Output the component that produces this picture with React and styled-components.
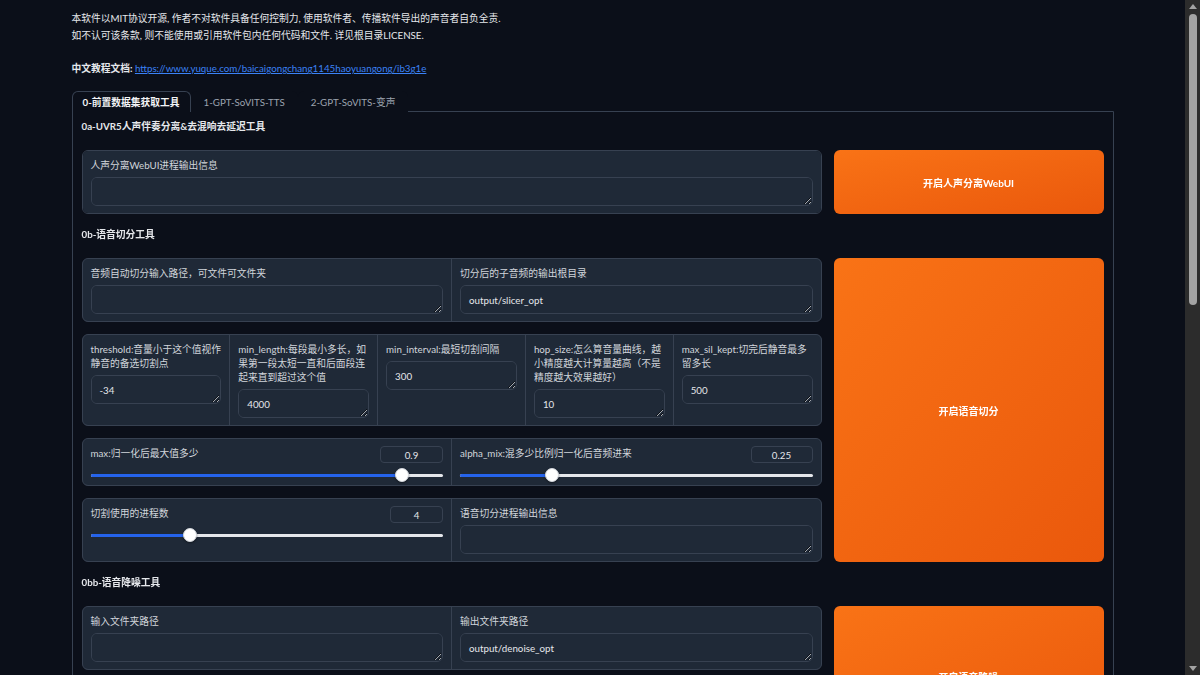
import React from "react";
import styled, { createGlobalStyle } from "styled-components";
import { ChevronDown } from "lucide-react";

const GlobalStyle = createGlobalStyle`
  html {
    color-scheme: dark;
  }
  body {
    margin: 0;
    padding-right: 15px;
    background: #0b0f19;
    color: #e5e7eb;
    font-family: Lato, "Noto Sans CJK SC", sans-serif;
    font-size: 9.75px;
  }
  * {
    box-sizing: border-box;
  }
`;

function Field({ label, value = "" }) {
  return (
    <Cell>
      <Label>{label}</Label>
      <TextArea rows={1} defaultValue={value} />
    </Cell>
  );
}

function Select({ label, value }) {
  return (
    <Cell>
      <Label>{label}</Label>
      <DropBox>
        <span>{value}</span>
        <ChevronDown size={12} strokeWidth={2} />
      </DropBox>
    </Cell>
  );
}

function Slider({ label, value, min, max, boxWidth }) {
  const f = (value - min) / (max - min);
  const pos = `calc(7px + ${f} * (100% - 14px))`;
  return (
    <SliderCell>
      <SliderHead>
        <Label>{label}</Label>
        <NumBox $w={boxWidth}>{value}</NumBox>
      </SliderHead>
      <SliderArea>
        <Rail>
          <Fill style={{ width: pos }} />
        </Rail>
        <Thumb style={{ left: pos }} />
      </SliderArea>
    </SliderCell>
  );
}

function ScrollBar() {
  return (
    <Scroll>
      <Arrow viewBox="0 0 8 5">
        <path d="M0 5 L4 0 L8 5 Z" />
      </Arrow>
      <ScrollThumb />
      <Arrow viewBox="0 0 8 5">
        <path d="M0 0 L8 0 L4 5 Z" />
      </Arrow>
    </Scroll>
  );
}

function App() {
  return (
    <>
      <GlobalStyle />
      <ScrollBar />
      <Page>
        <Notice>
          <p>
            本软件以MIT协议开源, 作者不对软件具备任何控制力, 使用软件者、传播软件导出的声音者自负全责.
            <br />
            如不认可该条款, 则不能使用或引用软件包内任何代码和文件. 详见根目录LICENSE.
          </p>
          <p>
            <strong>中文教程文档: </strong>
            <a href="#">https://www.yuque.com/baicaigongchang1145haoyuangong/ib3g1e</a>
          </p>
        </Notice>

        <TabNav>
          <Tab $active>0-前置数据集获取工具</Tab>
          <Tab>1-GPT-SoVITS-TTS</Tab>
          <Tab>2-GPT-SoVITS-变声</Tab>
        </TabNav>

        <Panel>
          <SectionTitle>0a-UVR5人声伴奏分离&amp;去混响去延迟工具</SectionTitle>
          <Section>
            <Group $cols={1}>
              <Field label="人声分离WebUI进程输出信息" />
            </Group>
            <PrimaryButton>开启人声分离WebUI</PrimaryButton>
          </Section>

          <SectionTitle>0b-语音切分工具</SectionTitle>
          <Section>
            <Stack>
              <Group $cols={2}>
                <Field label="音频自动切分输入路径，可文件可文件夹" />
                <Field label="切分后的子音频的输出根目录" value="output/slicer_opt" />
              </Group>
              <Group $cols={5}>
                <Field label="threshold:音量小于这个值视作静音的备选切割点" value="-34" />
                <Field label="min_length:每段最小多长，如果第一段太短一直和后面段连起来直到超过这个值" value="4000" />
                <Field label="min_interval:最短切割间隔" value="300" />
                <Field label="hop_size:怎么算音量曲线，越小精度越大计算量越高（不是精度越大效果越好）" value="10" />
                <Field label="max_sil_kept:切完后静音最多留多长" value="500" />
              </Group>
              <Group $cols={2}>
                <Slider label="max:归一化后最大值多少" value={0.9} min={0} max={1} boxWidth={63} />
                <Slider label="alpha_mix:混多少比例归一化后音频进来" value={0.25} min={0} max={1} boxWidth={62} />
              </Group>
              <Group $cols={2}>
                <Slider label="切割使用的进程数" value={4} min={1} max={12} boxWidth={53} />
                <Field label="语音切分进程输出信息" />
              </Group>
            </Stack>
            <PrimaryButton>开启语音切分</PrimaryButton>
          </Section>

          <SectionTitle>0bb-语音降噪工具</SectionTitle>
          <Section>
            <Stack>
              <Group $cols={2}>
                <Field label="输入文件夹路径" />
                <Field label="输出文件夹路径" value="output/denoise_opt" />
              </Group>
              <Group $cols={1}>
                <Field label="语音降噪进程输出信息" />
              </Group>
            </Stack>
            <PrimaryButton>开启语音降噪</PrimaryButton>
          </Section>

          <SectionTitle>0c-中文批量离线ASR工具</SectionTitle>
          <Section>
            <Stack>
              <Group $cols={2}>
                <Field label="输入文件夹路径" value="D:\GPT-SoVITS\raw\xxx" />
                <Field label="输出文件夹路径" value="output/asr_opt" />
              </Group>
              <Group $cols={4}>
                <Select label="ASR 模型" value="达摩 ASR (中文)" />
                <Select label="ASR 模型尺寸" value="large" />
                <Select label="ASR 语言设置" value="zh" />
                <Select label="数据类型精度" value="float32" />
              </Group>
              <Group $cols={1}>
                <Field label="ASR进程输出信息" />
              </Group>
            </Stack>
            <PrimaryButton>开启离线批量ASR</PrimaryButton>
          </Section>

          <SectionTitle>0d-语音文本校对标注工具</SectionTitle>
          <Section>
            <Group $cols={2}>
              <Field label=".list标注文件的路径" value="D:\RVC1006\GPT-SoVITS\raw\xxx.list" />
              <Field label="打标工具进程输出信息" />
            </Group>
            <PrimaryButton>开启打标WebUI</PrimaryButton>
          </Section>
        </Panel>

        <Footer>通过API使用 · 使用Gradio构建</Footer>
      </Page>
    </>
  );
}

export default App;

const Scroll = styled.div`
  position: fixed;
  top: 0;
  right: 0;
  bottom: 0;
  z-index: 10;
  width: 15px;
  display: flex;
  flex-direction: column;
  align-items: center;
  padding: 3px 0;
  background: #2c2c2c;
`;

const Arrow = styled.svg`
  width: 8px;
  height: 5px;
  margin: 1px 0;
  fill: #a3a3a3;
`;

const ScrollThumb = styled.div`
  width: 8px;
  height: 291px;
  margin: 4px 0 auto;
  border-radius: 4px;
  background: #a3a3a3;
`;

const Page = styled.div`
  max-width: 1042px;
  min-height: 1510px;
  margin: 0 auto;
  padding: 10px 0 24px;
`;

const Notice = styled.div`
  p {
    margin: 0 0 16px;
    line-height: 17px;
    color: #e5e7eb;
  }
  p:last-child {
    margin-bottom: 0;
  }
  strong {
    font-weight: 700;
  }
  a {
    color: #3b82f6;
    text-decoration: underline;
  }
`;

const TabNav = styled.div`
  display: flex;
  margin-top: 14px;
`;

const Tab = styled.div`
  position: relative;
  z-index: 1;
  height: 21px;
  display: flex;
  align-items: center;
  padding: 0 ${(p) => (p.$active ? "10px" : "12px")};
  margin-bottom: -1px;
  font-weight: ${(p) => (p.$active ? 700 : 400)};
  color: ${(p) => (p.$active ? "#f3f4f6" : "#9ca3af")};
  background: #0b0f19;
  border: 1px solid ${(p) => (p.$active ? "#374151" : "transparent")};
  border-bottom: none;
  border-radius: 6px 6px 0 0;
`;

const Panel = styled.div`
  display: flex;
  flex-direction: column;
  gap: 12px;
  padding: 6px 9px 12px;
  border: 1px solid #374151;
  border-radius: 0 0 6px 6px;
`;

const SectionTitle = styled.div`
  font-weight: 700;
  line-height: 16px;
  padding-bottom: 4px;
  color: #e5e7eb;
`;

const Section = styled.div`
  display: grid;
  grid-template-columns: 1fr 270px;
  gap: 12px;
`;

const Stack = styled.div`
  display: flex;
  flex-direction: column;
  gap: 12px;
`;

const Group = styled.div`
  display: grid;
  grid-template-columns: repeat(${(p) => p.$cols}, 1fr);
  gap: 1px;
  background: #374151;
  border: 1px solid #374151;
  border-radius: 6px;
  overflow: hidden;
`;

const Cell = styled.div`
  display: flex;
  flex-direction: column;
  min-width: 0;
  padding: 7px 8px 7px;
  background: #1f2937;
`;

const SliderCell = styled(Cell)`
  padding-bottom: 1px;
`;

const Label = styled.div`
  line-height: 14px;
  margin-bottom: 5px;
  color: #d1d5db;
`;

const TextArea = styled.textarea`
  display: block;
  width: 100%;
  height: 29px;
  padding: 7px 8px;
  resize: vertical;
  background: #1f2937;
  border: 1px solid #374151;
  border-radius: 6px;
  color: #e5e7eb;
  font-family: inherit;
  font-size: 9.75px;
  line-height: 14px;
  outline: none;
`;

const DropBox = styled.div`
  display: flex;
  align-items: center;
  justify-content: space-between;
  height: 29px;
  padding: 0 8px;
  border: 1px solid #374151;
  border-radius: 6px;
  color: #e5e7eb;

  svg {
    color: #9ca3af;
  }
`;

const SliderHead = styled.div`
  display: flex;
  justify-content: space-between;
  align-items: flex-start;
  height: 17px;
`;

const NumBox = styled.div`
  width: ${(p) => p.$w}px;
  height: 17px;
  display: flex;
  align-items: center;
  justify-content: center;
  border: 1px solid #374151;
  border-radius: 4px;
  color: #e5e7eb;
`;

const SliderArea = styled.div`
  position: relative;
  display: flex;
  align-items: center;
  height: 18px;
  margin-top: 3px;
`;

const Rail = styled.div`
  width: 100%;
  height: 3px;
  border-radius: 2px;
  background: #e5e7eb;
`;

const Fill = styled.div`
  height: 100%;
  border-radius: 2px;
  background: #2563eb;
`;

const Thumb = styled.div`
  position: absolute;
  top: 50%;
  width: 14px;
  height: 14px;
  border-radius: 50%;
  background: #ffffff;
  border: 1px solid #d1d5db;
  box-shadow: 0 1px 2px rgba(0, 0, 0, 0.4);
  transform: translate(-50%, -50%);
`;

const PrimaryButton = styled.button`
  border: none;
  border-radius: 6px;
  background: linear-gradient(to bottom right, #f97316, #ea580c);
  color: #ffffff;
  font-family: inherit;
  font-size: 10px;
  font-weight: 700;
  cursor: pointer;
`;

const Footer = styled.div`
  margin-top: 24px;
  text-align: center;
  color: #9ca3af;
`;
